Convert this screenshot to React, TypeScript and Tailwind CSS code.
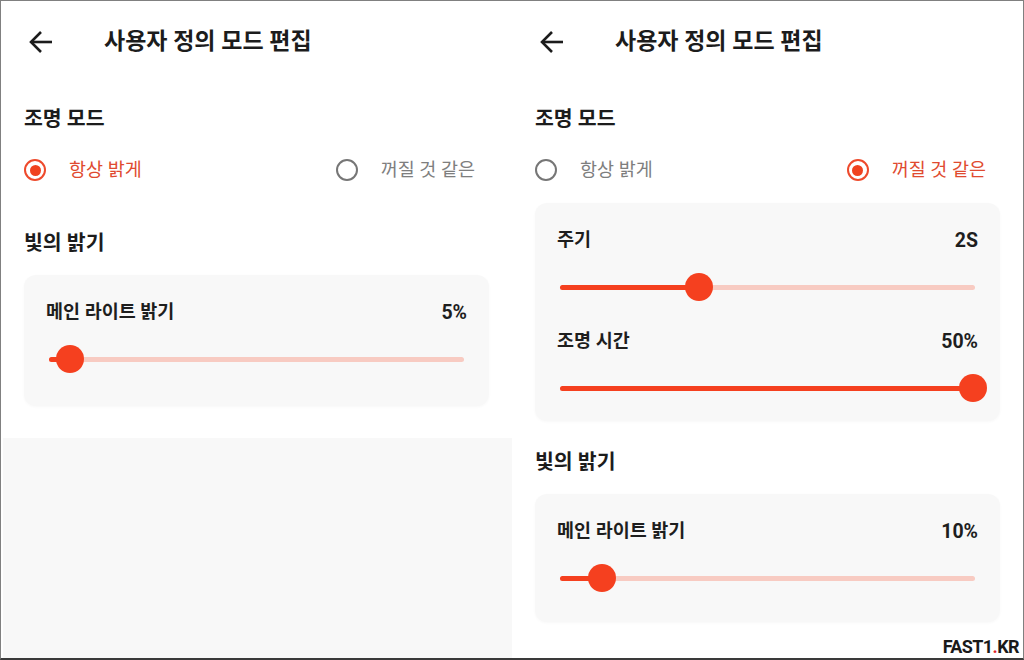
import React from 'react';

type SliderProps = {
    label: string;
    value: string;
    percent: number;
    gap: string;
};

const RED = '#f5401f';

function BackArrow() {
    return (
        <svg width="26" height="24" viewBox="0 0 26 24" fill="none" className="ml-[4px] shrink-0">
            <path d="M24 12H3" stroke="#1c1c1c" strokeWidth="2.6" />
            <path d="M13 2L3 12l10 10" stroke="#1c1c1c" strokeWidth="2.6" />
        </svg>
    );
}

function Radio({ label, checked }: { label: string; checked: boolean }) {
    return (
        <div className="flex items-center">
            <div
                className={
                    checked
                        ? 'w-[22px] h-[22px] rounded-full border-2 border-[#ee4a2c] flex items-center justify-center'
                        : 'w-[22px] h-[22px] rounded-full border-2 border-[#767676]'
                }
            >
                {checked && <div className="w-[11px] h-[11px] rounded-full bg-[#f0421f]" />}
            </div>
            <span
                className={
                    checked
                        ? 'ml-[23px] text-[18.5px] leading-[28px] text-[#e04a2f]'
                        : 'ml-[23px] text-[18.5px] leading-[28px] text-[#7e7e7e]'
                }
            >
                {label}
            </span>
        </div>
    );
}

function Slider({ label, value, percent, gap }: SliderProps) {
    return (
        <div className={gap}>
            <div className="flex justify-between items-center h-[24px]">
                <span className="text-[18.5px] font-bold text-[#1e1e1e]">{label}</span>
                <span className="text-[19.5px] font-bold text-[#1e1e1e]">{value}</span>
            </div>
            <div className="relative mt-[20px] mx-[3px] h-[28px] flex items-center">
                <div className="w-full h-[5px] rounded-full bg-[#f8cbc2]" />
                <div
                    className="absolute left-0 h-[5px] rounded-full"
                    style={{ width: `${percent}%`, backgroundColor: RED }}
                />
                <div
                    className="absolute w-[28px] h-[28px] rounded-full -translate-x-1/2"
                    style={{ left: `${percent}%`, backgroundColor: RED }}
                />
            </div>
        </div>
    );
}

function Header() {
    return (
        <div className="h-[82px] flex items-center">
            <BackArrow />
            <h1 className="ml-[50px] text-[23px] font-bold text-[#1c1c1c]">사용자 정의 모드 편집</h1>
        </div>
    );
}

function SectionTitle({ children, className }: { children: React.ReactNode; className: string }) {
    return <h2 className={`text-[20.5px] font-bold leading-[28px] text-[#1c1c1c] ${className}`}>{children}</h2>;
}

export default function App() {
    return (
        <div className="relative w-[1024px] h-[660px] overflow-hidden bg-white border border-[#808080] border-b-2 border-b-[#3a3a3a] flex font-[Roboto,'Noto_Sans_CJK_KR',sans-serif]">
            {/* left screen */}
            <div className="w-[511px] flex flex-col">
                <div className="h-[437px] px-[23px]">
                    <Header />
                    <SectionTitle className="mt-[22px]">조명 모드</SectionTitle>
                    <div className="mt-[23px] flex justify-between pr-[14px]">
                        <Radio label="항상 밝게" checked />
                        <Radio label="꺼질 것 같은" checked={false} />
                    </div>
                    <SectionTitle className="mt-[45px]">빛의 밝기</SectionTitle>
                    <div className="mt-[18px] rounded-[12px] bg-[#f8f8f8] shadow-[0_1px_3px_rgba(0,0,0,0.03)] px-[22px] pt-[26px] pb-[33px]">
                        <Slider label="메인 라이트 밝기" value="5%" percent={5} gap="" />
                    </div>
                </div>
                <div className="flex-1 ml-[2px] bg-[#f8f8f8]" />
            </div>

            {/* right screen */}
            <div className="flex-1 px-[23px]">
                <Header />
                <SectionTitle className="mt-[22px]">조명 모드</SectionTitle>
                <div className="mt-[23px] flex justify-between pr-[14px]">
                    <Radio label="항상 밝게" checked={false} />
                    <Radio label="꺼질 것 같은" checked />
                </div>
                <div className="mt-[19px] rounded-[12px] bg-[#f8f8f8] shadow-[0_1px_3px_rgba(0,0,0,0.03)] px-[22px] pt-[26px] pb-[19px]">
                    <Slider label="주기" value="2S" percent={33.4} gap="" />
                    <Slider label="조명 시간" value="50%" percent={99.5} gap="mt-[29px]" />
                </div>
                <SectionTitle className="mt-[27px]">빛의 밝기</SectionTitle>
                <div className="mt-[18px] rounded-[12px] bg-[#f8f8f8] shadow-[0_1px_3px_rgba(0,0,0,0.03)] px-[22px] pt-[26px] pb-[30px]">
                    <Slider label="메인 라이트 밝기" value="10%" percent={10} gap="" />
                </div>
            </div>

            {/* watermark */}
            <div className="absolute right-[4px] bottom-[1px] text-[18px] font-bold leading-[20px] text-[#1a1a1a] tracking-[-0.6px]">
                FAST1<span className="text-[#e0202a]">.</span>KR
            </div>
        </div>
    );
}
